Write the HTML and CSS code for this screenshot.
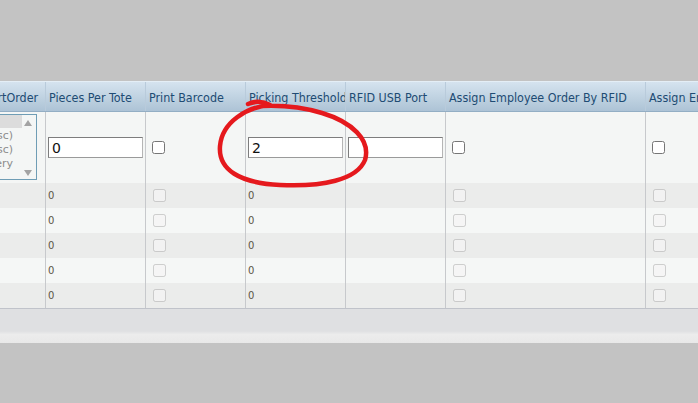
FILE: index.html
```html
<!DOCTYPE html>
<html lang="en">
<head>
    <meta charset="UTF-8">
    <title>Station Settings</title>
    <link rel="stylesheet" href="styles.css">
</head>
<body>

<div class="screen">
    <div class="grid">
        <!-- column titles -->
        <div class="row head">
            <div class="cell c1">Batch SortOrder</div>
            <div class="cell">Pieces Per Tote</div>
            <div class="cell">Print Barcode</div>
            <div class="cell">Picking Threshold</div>
            <div class="cell">RFID USB Port</div>
            <div class="cell wide">Assign Employee Order By RFID</div>
            <div class="cell">Assign Employee Tote By RFID</div>
        </div>

        <!-- edit row -->
        <div class="row edit">
            <div class="cell c1">
                <div class="listbox">
                    <div class="items">
                        <div class="item selected">&nbsp;</div>
                        <div class="item">Qty (Asc)</div>
                        <div class="item">Qty (Desc)</div>
                        <div class="item">Delivery</div>
                    </div>
                    <div class="scroll">
                        <span class="arrow up"></span>
                        <span class="arrow down"></span>
                    </div>
                </div>
            </div>
            <div class="cell"><input type="text" class="field" value="0"></div>
            <div class="cell"><input type="checkbox" class="check"></div>
            <div class="cell"><input type="text" class="field" value="2"></div>
            <div class="cell"><input type="text" class="field" value=""></div>
            <div class="cell wide"><input type="checkbox" class="check"></div>
            <div class="cell"><input type="checkbox" class="check"></div>
        </div>

        <div id="rows"></div>

        <div class="footer"></div>
    </div>

    <!-- marker drawn around the threshold field -->
    <svg class="marker" width="698" height="403" viewBox="0 0 698 403">
        <path d="M 248 104 C 255 101, 263 101, 270 105
                 C 247 107, 222 122, 220 146
                 C 218 170, 240 183, 280 185
                 C 322 187, 357 180, 365 160
                 C 371 140, 352 122, 322 113
                 C 302 107, 284 105, 262 106"
              fill="none" stroke="#e5191d" stroke-width="4.5" stroke-linecap="round" stroke-linejoin="round"/>
    </svg>
</div>

<script>
    // saved rows, all with the default values
    const rows = [
        { pieces: 0, threshold: 0 },
        { pieces: 0, threshold: 0 },
        { pieces: 0, threshold: 0 },
        { pieces: 0, threshold: 0 },
        { pieces: 0, threshold: 0 }
    ];

    const container = document.getElementById('rows');
    rows.forEach((row, index) => {
        container.insertAdjacentHTML('beforeend', `
        <div class="row data ${index % 2 ? 'even' : 'odd'}">
            <div class="cell c1"></div>
            <div class="cell">${row.pieces}</div>
            <div class="cell"><input type="checkbox" class="check" disabled></div>
            <div class="cell">${row.threshold}</div>
            <div class="cell"></div>
            <div class="cell wide"><input type="checkbox" class="check" disabled></div>
            <div class="cell"><input type="checkbox" class="check" disabled></div>
        </div>`);
    });
</script>

</body>
</html>
```

FILE: styles.css
```css
body {
    margin: 0;
    background-color: #c3c3c3;
    font-family: "DejaVu Sans", Verdana, sans-serif;
}

.screen {
    position: relative;
    width: 698px;
    height: 403px;
    overflow: hidden;
}

.grid {
    margin-top: 81px;
    width: 698px;
    overflow: hidden;
    background-color: #f4f6f5;
}

.row {
    display: flex;
    margin-left: -55px;
}

.cell {
    flex: none;
    box-sizing: border-box;
    width: 100px;
    border-right: 1px solid #c7c9cc;
    white-space: nowrap;
    overflow: hidden;
    display: flex;
    align-items: center;
}

.cell.c1 {
    width: 101px;
}

.cell.wide {
    width: 200px;
}

/* header */
.head {
    height: 31px;
    box-sizing: border-box;
    border-top: 1px solid #e4eef6;
    border-bottom: 1px solid #93aec4;
    background: linear-gradient(#d5e3ef, #b9cddd 70%, #adc3d6);
}

.head .cell {
    padding-left: 3px;
    padding-top: 1px;
    border-right-color: #b9cbdb;
    font-family: "DejaVu Sans Condensed", "DejaVu Sans", sans-serif;
    font-size: 12.4px;
    color: #204b73;
}

/* edit row */
.edit {
    height: 71px;
    background-color: #f4f6f5;
}

.edit .cell {
    padding-left: 2px;
}

.field {
    box-sizing: border-box;
    width: 95px;
    height: 21px;
    margin: 0;
    padding: 0 3px;
    border: 1px solid #7d7d7d;
    border-right-color: #b5b5b5;
    border-bottom-color: #9a9a9a;
    background-color: white;
    font-family: "DejaVu Sans", sans-serif;
    font-size: 14px;
    color: #111;
}

.check {
    margin: 0 0 0 4px;
    width: 13px;
    height: 13px;
}

.listbox {
    display: flex;
    box-sizing: border-box;
    width: 88px;
    height: 66px;
    margin: 2px 8px 3px auto;
    align-self: flex-start;
    border: 1px solid #6f9db5;
    background-color: #f4f6f5;
}

.items {
    flex: 1;
    min-width: 0;
    overflow: hidden;
}

.item {
    height: 14px;
    line-height: 15px;
    padding-right: 9px;
    text-align: right;
    font-size: 11px;
    color: #8c8c8c;
    overflow: hidden;
}

.item.selected {
    height: 13px;
    background-color: #dcdcdc;
}

.scroll {
    flex: none;
    position: relative;
    width: 14px;
}

.arrow {
    position: absolute;
    left: 2px;
    width: 0;
    height: 0;
    border-left: 4.5px solid transparent;
    border-right: 4.5px solid transparent;
}

.arrow.up {
    top: 5px;
    border-bottom: 6px solid #a3a3a3;
}

.arrow.down {
    bottom: 3px;
    border-top: 6px solid #a3a3a3;
}

/* saved rows */
.data {
    height: 25px;
    font-size: 10px;
    color: #5b5546;
}

.data .cell {
    padding-left: 2px;
}

.data.odd {
    background-color: #ebeceb;
}

.data.even {
    background-color: #f5f7f6;
}

.data .check {
    margin-left: 5px;
}

.footer {
    height: 34px;
    border-top: 1px solid #c0c3ca;
    background: linear-gradient(#dfe0e2, #dfe0e2 65%, #ececec 75%, #e8e8e8);
}

.marker {
    position: absolute;
    top: 0;
    left: 0;
    pointer-events: none;
}
```
